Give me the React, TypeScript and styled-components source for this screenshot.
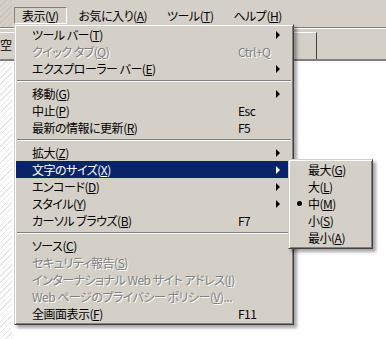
import React from 'react';
import styled, { createGlobalStyle } from 'styled-components';

const face = '#d4d0c8';
const shadow = '#808080';
const dark = '#404040';
const select = '#0a246a';

const GlobalStyle = createGlobalStyle`
  html, body { margin: 0; padding: 0; }
  body {
    font-family: "Noto Sans CJK JP", "Noto Sans", sans-serif;
    font-size: 12px;
    font-feature-settings: "palt";
    letter-spacing: -0.5px;
    background: #fff;
  }
`;

type Item = {
  label: string;
  mn: string;
  tail?: string;
  shortcut?: string;
  sub?: boolean;
  disabled?: boolean;
  active?: boolean;
};

const groups: Item[][] = [
  [
    { label: 'ツール バー', mn: 'T', sub: true },
    { label: 'クイック タブ', mn: 'Q', shortcut: 'Ctrl+Q', disabled: true },
    { label: 'エクスプローラー バー', mn: 'E', sub: true },
  ],
  [
    { label: '移動', mn: 'G', sub: true },
    { label: '中止', mn: 'P', shortcut: 'Esc' },
    { label: '最新の情報に更新', mn: 'R', shortcut: 'F5' },
  ],
  [
    { label: '拡大', mn: 'Z', sub: true },
    { label: '文字のサイズ', mn: 'X', sub: true, active: true },
    { label: 'エンコード', mn: 'D', sub: true },
    { label: 'スタイル', mn: 'Y', sub: true },
    { label: 'カーソル ブラウズ', mn: 'B', shortcut: 'F7' },
  ],
  [
    { label: 'ソース', mn: 'C' },
    { label: 'セキュリティ報告', mn: 'S', disabled: true },
    { label: 'インターナショナル Web サイト アドレス', mn: 'I', disabled: true },
    { label: 'Web ページのプライバシー ポリシー', mn: 'V', tail: '...', disabled: true },
    { label: '全画面表示', mn: 'F', shortcut: 'F11' },
  ],
];

const sizes = [
  { label: '最大', mn: 'G' },
  { label: '大', mn: 'L' },
  { label: '中', mn: 'M', checked: true },
  { label: '小', mn: 'S' },
  { label: '最小', mn: 'A' },
];

const barItems = [
  { label: '表示', mn: 'V', open: true },
  { label: 'お気に入り', mn: 'A' },
  { label: 'ツール', mn: 'T' },
  { label: 'ヘルプ', mn: 'H' },
];

export default function App() {
  return (
    <>
      <GlobalStyle />
      <Window>
        <MenuBar>
          {barItems.map((b) => (
            <BarItem key={b.label} $open={!!b.open}>
              {b.label}(<Mn>{b.mn}</Mn>)
            </BarItem>
          ))}
        </MenuBar>
        <ToolStrip>
          <Tab>空</Tab>
        </ToolStrip>
        <Content />

        <Dropdown>
          {groups.map((g, gi) => (
            <React.Fragment key={gi}>
              {gi > 0 && <Separator />}
              {g.map((it) => (
                <Row key={it.label} $active={!!it.active} $disabled={!!it.disabled}>
                  <span>
                    {it.label}(<Mn>{it.mn}</Mn>){it.tail}
                  </span>
                  <span>{it.shortcut}</span>
                  <ArrowCell>{it.sub && <Arrow $active={!!it.active} />}</ArrowCell>
                </Row>
              ))}
            </React.Fragment>
          ))}
        </Dropdown>

        <SubMenu>
          {sizes.map((s) => (
            <SubRow key={s.label}>
              <Check>{s.checked && <Dot />}</Check>
              <span>
                {s.label}(<Mn>{s.mn}</Mn>)
              </span>
            </SubRow>
          ))}
        </SubMenu>
      </Window>
    </>
  );
}

const Window = styled.div`
  position: relative;
  width: 386px;
  height: 339px;
  overflow: hidden;
  display: flex;
  flex-direction: column;
  background: #fff;
`;

const MenuBar = styled.div`
  height: 28px;
  box-sizing: border-box;
  display: flex;
  align-items: flex-start;
  padding: 7px 0 0 14px;
  background:
    repeating-linear-gradient(135deg, #c8c4bc 0 1px, ${face} 1px 4px) left top / 12px 100% no-repeat,
    ${face};
  border-bottom: 1px solid ${shadow};
`;

const BarItem = styled.div<{ $open: boolean }>`
  height: 17px;
  line-height: 16px;
  padding: 0 7px;
  margin-right: 4px;
  color: #000;
  white-space: nowrap;
  box-sizing: border-box;
  border: 1px solid transparent;
  ${({ $open }) => $open && `border-color: ${shadow} #fff #fff ${shadow};`}
`;

const Mn = styled.u`
  text-decoration: underline;
  text-underline-offset: 1px;
`;

const ToolStrip = styled.div`
  height: 33px;
  box-sizing: border-box;
  background: ${face};
  border-top: 1px solid #fff;
  border-bottom: 2px solid ${shadow};
  padding-top: 3px;
  display: flex;
`;

const Tab = styled.div`
  width: 317px;
  box-sizing: border-box;
  border-top: 1px solid #fff;
  border-right: 1px solid ${dark};
  line-height: 24px;
  color: #000;
  white-space: nowrap;
  overflow: hidden;
`;

const Content = styled.div`
  flex: 1;
  background:
    repeating-linear-gradient(135deg, #e6e6e6 0 1px, #fff 1px 4px) left top / 12px 100% no-repeat,
    #fff;
`;

const Panel = styled.div`
  position: absolute;
  box-sizing: border-box;
  padding: 1px 1px 2px;
  background: ${face};
  border: 1px solid;
  border-color: ${face} ${dark} ${dark} ${face};
  box-shadow: inset 1px 1px #fff, inset -1px -1px ${shadow}, 3px 3px 3px rgba(0, 0, 0, 0.35);
`;

const Dropdown = styled(Panel)`
  left: 14px;
  top: 24px;
  width: 280px;
`;

const Row = styled.div<{ $active: boolean; $disabled: boolean }>`
  display: grid;
  grid-template-columns: 206px 1fr 16px;
  height: 17px;
  line-height: 17px;
  padding-left: 16px;
  white-space: nowrap;
  background: ${({ $active }) => ($active ? select : 'transparent')};
  color: ${({ $active, $disabled }) => ($active ? '#fff' : $disabled ? shadow : '#000')};
  text-shadow: ${({ $disabled }) => ($disabled ? '1px 1px 0 #fff' : 'none')};
`;

const ArrowCell = styled.span`
  display: flex;
  align-items: center;
`;

const Arrow = styled.span<{ $active: boolean }>`
  width: 0;
  height: 0;
  border-top: 4px solid transparent;
  border-bottom: 4px solid transparent;
  border-left: 4px solid ${({ $active }) => ($active ? '#fff' : '#000')};
`;

const Separator = styled.div`
  height: 8px;
  display: flex;
  flex-direction: column;
  justify-content: center;
  padding: 0 1px;
  &::before {
    content: '';
    display: block;
    border-top: 1px solid ${shadow};
    border-bottom: 1px solid #fff;
  }
`;

const SubMenu = styled(Panel)`
  left: 288px;
  top: 159px;
  width: 85px;
`;

const SubRow = styled.div`
  display: flex;
  align-items: center;
  height: 17px;
  line-height: 17px;
  color: #000;
  white-space: nowrap;
`;

const Check = styled.span`
  width: 17px;
  display: flex;
  justify-content: center;
  padding-left: 1px;
`;

const Dot = styled.span`
  width: 5px;
  height: 5px;
  border-radius: 50%;
  background: #000;
`;
